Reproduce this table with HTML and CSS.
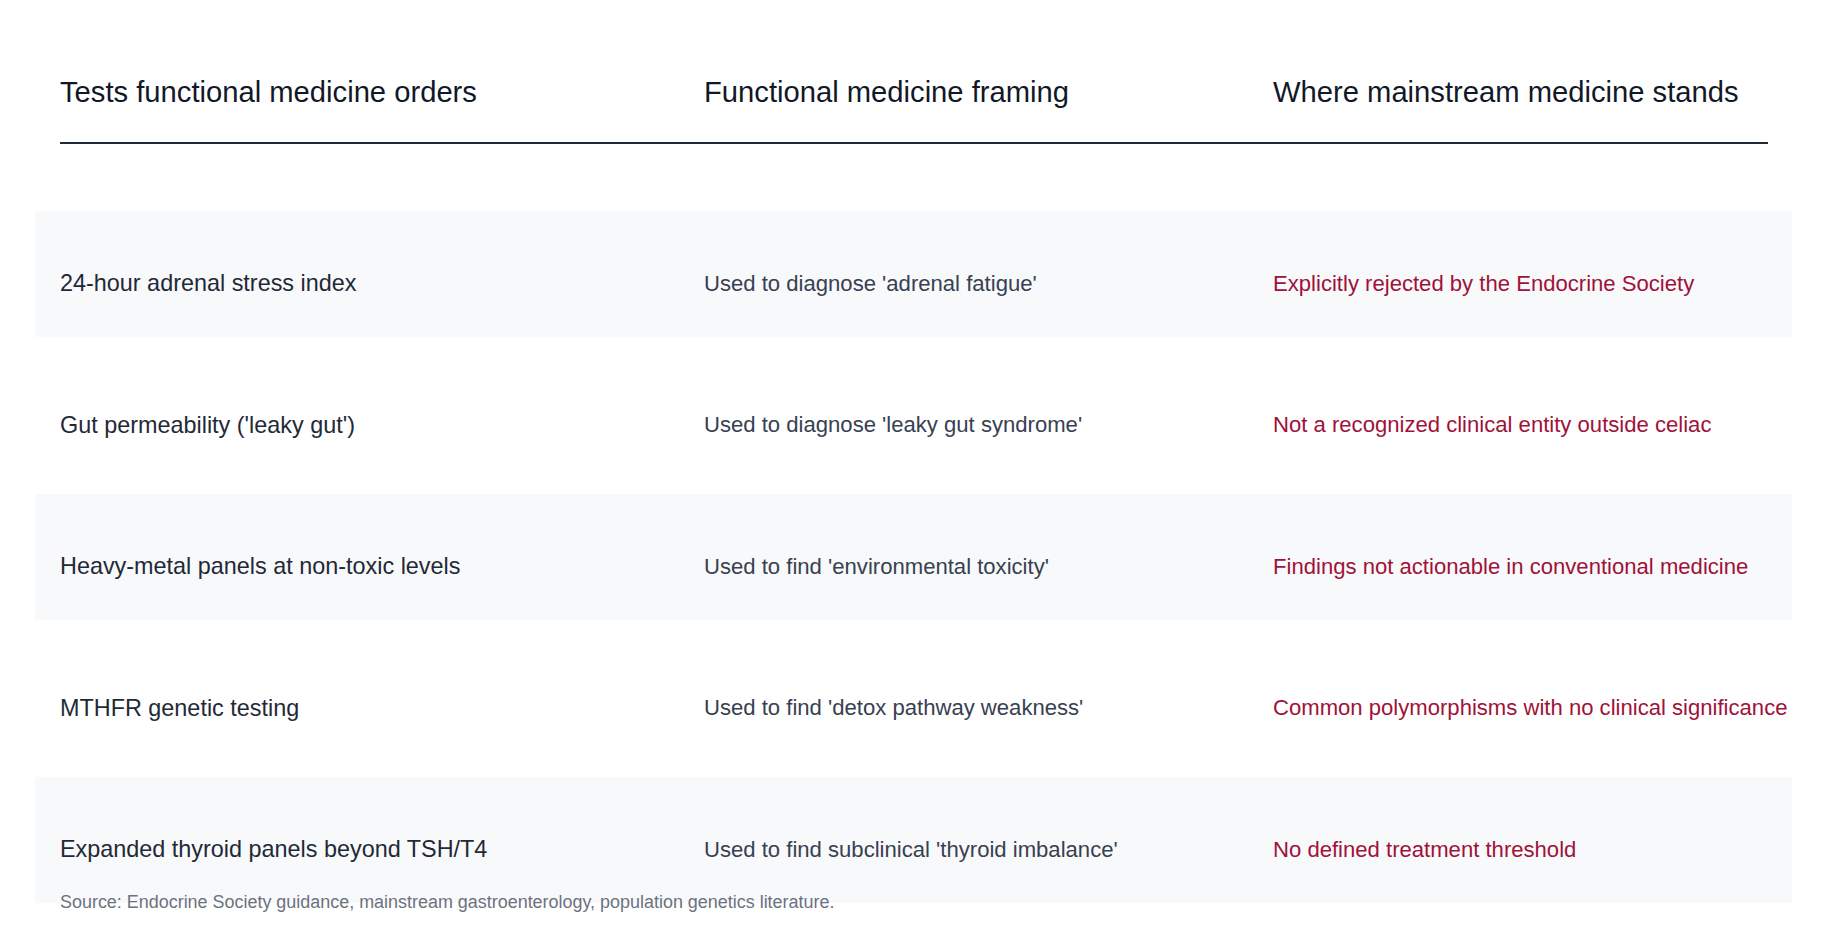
FILE: index.html
```html
<!DOCTYPE html>
<html lang="en">
<head>
<meta charset="utf-8">
<title>Functional medicine tests</title>
<link rel="stylesheet" href="styles.css">
</head>
<body>
<main class="page">
  <div class="table">
    <div class="head">
      <div class="th">Tests functional medicine orders</div>
      <div class="th">Functional medicine framing</div>
      <div class="th">Where mainstream medicine stands</div>
    </div>
    <div class="rows">
      <div class="row shaded">
        <div class="c1">24-hour adrenal stress index</div>
        <div class="c2">Used to diagnose 'adrenal fatigue'</div>
        <div class="c3">Explicitly rejected by the Endocrine Society</div>
      </div>
      <div class="row">
        <div class="c1">Gut permeability ('leaky gut')</div>
        <div class="c2">Used to diagnose 'leaky gut syndrome'</div>
        <div class="c3">Not a recognized clinical entity outside celiac</div>
      </div>
      <div class="row shaded">
        <div class="c1">Heavy-metal panels at non-toxic levels</div>
        <div class="c2">Used to find 'environmental toxicity'</div>
        <div class="c3">Findings not actionable in conventional medicine</div>
      </div>
      <div class="row">
        <div class="c1">MTHFR genetic testing</div>
        <div class="c2">Used to find 'detox pathway weakness'</div>
        <div class="c3">Common polymorphisms with no clinical significance</div>
      </div>
      <div class="row shaded">
        <div class="c1">Expanded thyroid panels beyond TSH/T4</div>
        <div class="c2">Used to find subclinical 'thyroid imbalance'</div>
        <div class="c3">No defined treatment threshold</div>
      </div>
    </div>
    <p class="source">Source: Endocrine Society guidance, mainstream gastroenterology, population genetics literature.</p>
  </div>
</main>
</body>
</html>
```

FILE: styles.css
```css
html, body {
  margin: 0;
  padding: 0;
  background: #ffffff;
}

body {
  font-family: "Liberation Sans", Arial, sans-serif;
  color: #1f2937;
}

.page {
  padding: 0 60px;
}

.table {
  width: 1708px;
}

.head {
  display: grid;
  grid-template-columns: 644px 569px 495px;
  padding: 75px 0 33px;
  border-bottom: 2px solid #1f2937;
}

.th {
  font-size: 29.2px;
  line-height: 34px;
  color: #111827;
  white-space: nowrap;
}

.rows {
  margin-top: 67px;
  height: 679px;
  display: flex;
  flex-direction: column;
  gap: 15.5px;
}

.row {
  flex: 0 0 auto;
  box-sizing: border-box;
  height: 126px;
  margin: 0 -24px 0 -25px;
  padding: 18px 24px 0 25px;
  display: grid;
  grid-template-columns: 644px 569px 495px;
  align-items: center;
  white-space: nowrap;
}

.row.shaded {
  background: #f8f9fb;
}

.c1 {
  font-size: 23.4px;
  line-height: 28px;
  color: #1f2937;
}

.c2 {
  font-size: 22.1px;
  line-height: 27px;
  color: #374151;
}

.c3 {
  font-size: 22.1px;
  line-height: 27px;
  color: #9f1239;
}

.source {
  margin: 0;
  font-size: 17.95px;
  line-height: 22px;
  color: #6b7280;
  position: relative;
  top: 1px;
}
```
